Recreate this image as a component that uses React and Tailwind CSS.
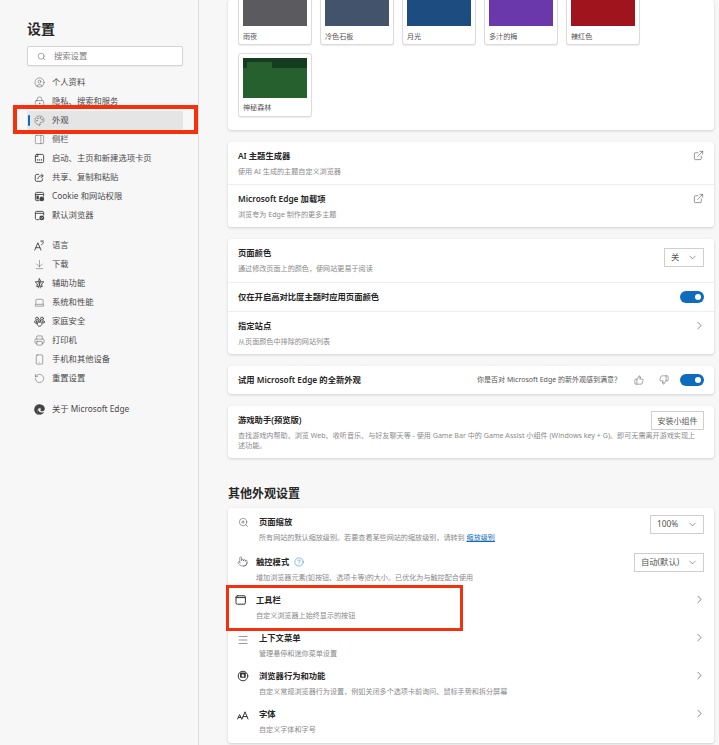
import React from "react";
import {
  Search, CircleUser, LockKeyhole, Palette, PanelRight, Laptop, Printer, Smartphone, RotateCcw,
  ArrowDownToLine, ExternalLink, ChevronDown, ChevronRight, ThumbsUp, ThumbsDown, ZoomIn, Pointer, HelpCircle, Menu,
} from "lucide-react";
import { FaEdge } from "react-icons/fa";

const FONT = "font-['Noto_Sans','Noto_Sans_CJK_SC',sans-serif]";

function Svg({ size = 12, className = "", strokeWidth = 1, children }) {
  return (
    <svg width={size} height={size} viewBox="0 0 12 12" fill="none" stroke="currentColor" strokeWidth={strokeWidth} strokeLinecap="round" strokeLinejoin="round" className={className}>
      {children}
    </svg>
  );
}

const StartIcon = (p) => (
  <Svg {...p}>
    <rect x="1.5" y="1.5" width="9" height="9" rx="1.5" />
    <path d="M1.5 3.8h2.6V1.5" />
    <path d="M3.6 7.5h.4M5.8 7.5h.4M8 7.5h.4" strokeWidth="1.1" />
  </Svg>
);
const ShareIcon = (p) => (
  <Svg {...p}>
    <path d="M5 2.6H3A1.6 1.6 0 0 0 1.4 4.2v4.4A1.6 1.6 0 0 0 3 10.2h4.6a1.6 1.6 0 0 0 1.6-1.6V7.4" />
    <path d="M4.2 7.4c.3-2 1.6-3.2 3.4-3.2h1.8" />
    <path d="M8.2 2.4l2 1.8-2 1.8" />
  </Svg>
);
const CookieIcon = (p) => (
  <Svg {...p}>
    <path d="M5.5 10.5H2.8a1.3 1.3 0 0 1-1.3-1.3V2.8a1.3 1.3 0 0 1 1.3-1.3h6.4a1.3 1.3 0 0 1 1.3 1.3v2.7" />
    <path d="M1.5 3.8h9" />
    <rect x="2.6" y="5" width="2.6" height="4.2" fill="currentColor" stroke="none" />
    <circle cx="8.5" cy="8.6" r="2.6" fill="currentColor" stroke="none" />
  </Svg>
);
const DefaultIcon = (p) => (
  <Svg {...p}>
    <path d="M5.5 10.5H2.8a1.3 1.3 0 0 1-1.3-1.3V2.8a1.3 1.3 0 0 1 1.3-1.3h6.4a1.3 1.3 0 0 1 1.3 1.3v2.7" />
    <path d="M1.5 3.6h9" />
    <circle cx="8.5" cy="8.6" r="2.7" fill="currentColor" stroke="none" />
    <path d="M7.4 8.7l.8.8 1.4-1.6" stroke="#f7f7f7" strokeWidth="0.7" />
  </Svg>
);
const LangIcon = (p) => (
  <Svg {...p}>
    <path d="M.8 11L4.2 3l3.4 8M2 8.4h4.4" />
    <path d="M7.2 1.2h3.2M8.8 1v1.2M10.4 2.6c-.3 1.2-1.2 2.1-2.4 2.6" strokeWidth="0.8" />
  </Svg>
);
const AccessIcon = (p) => (
  <Svg {...p}>
    <path d="M6 .9l1.4 3 3.3.4-2.4 2.2.6 3.3L6 8.2 3.1 9.8l.6-3.3L1.3 4.3l3.3-.4z" />
    <circle cx="6" cy="4.4" r=".7" />
    <path d="M4.6 5.6h2.8M6 5.6v1.6M6 7.2l-1 3.6M6 7.2l1 3.6" strokeWidth="0.8" />
  </Svg>
);
const FamilyIcon = (p) => (
  <Svg {...p}>
    <circle cx="3.3" cy="2.8" r="1.6" />
    <circle cx="8.7" cy="2.8" r="1.6" />
    <circle cx="1.9" cy="6.4" r="1.3" />
    <circle cx="10.1" cy="6.4" r="1.3" />
    <circle cx="6" cy="5.2" r="1.1" />
    <path d="M3.3 8.2C3.3 7 4.5 6.6 6 6.6s2.7.4 2.7 1.6c0 1.7-1.2 3-2.7 3s-2.7-1.3-2.7-3z" />
  </Svg>
);
const ToolbarIcon = (p) => (
  <Svg {...p}>
    <rect x="1" y="1.8" width="9.4" height="8.4" rx="1.4" />
    <path d="M1 3.6h9.4" />
  </Svg>
);
const BehaviorIcon = (p) => (
  <Svg {...p}>
    <circle cx="6" cy="6" r="4.8" />
    <rect x="3" y="2.6" width="5.8" height="5.2" rx=".8" fill="currentColor" stroke="none" />
    <path d="M5.9 3.6l.6 1.2 1.2.2-.9.8.2 1.2-1.1-.6-1.1.6.2-1.2-.9-.8 1.2-.2z" fill="#fff" stroke="none" />
  </Svg>
);
const FontIcon = (p) => (
  <Svg {...p}>
    <path d="M.6 10L2.6 5.6 4.6 10M1.3 8.5h2.6" />
    <path d="M5 10L8 2.8 11 10M6.1 7.6h3.8" />
  </Svg>
);

const nav1 = [
  ["个人资料", CircleUser], ["隐私、搜索和服务", LockKeyhole], ["外观", Palette, true], ["侧栏", PanelRight],
  ["启动、主页和新建选项卡页", StartIcon], ["共享、复制和粘贴", ShareIcon], ["Cookie 和网站权限", CookieIcon], ["默认浏览器", DefaultIcon],
];
const nav2 = [
  ["语言", LangIcon], ["下载", ArrowDownToLine], ["辅助功能", AccessIcon], ["系统和性能", Laptop],
  ["家庭安全", FamilyIcon], ["打印机", Printer], ["手机和其他设备", Smartphone], ["重置设置", RotateCcw],
];

function NavItem({ label, Icon, active }) {
  return (
    <div className={`relative flex h-[19px] items-center rounded-[2px] ${active ? "bg-[#e5e5e5]" : ""}`}>
      {active && <span className="absolute left-[1px] top-[4px] h-[11px] w-[1.5px] rounded bg-[#0f6cbd]" />}
      <span className="flex w-[25px] justify-end pr-[7px]">
        <Icon size={11} strokeWidth={1} className="text-[#444]" />
      </span>
      <span className="text-[8.3px] text-[#4a4a4a]">{label}</span>
    </div>
  );
}

function Tile({ name, color }) {
  return (
    <div className="h-[45px] w-[74px] rounded-b-[3px] border border-t-0 border-[#dcdcdc] bg-white px-[4px] shadow-[0_1px_1px_rgba(0,0,0,0.08)]">
      <div className={`h-[25.5px] w-full ${color}`} />
      <div className="mt-[5px] text-[7.1px] leading-[10px] text-[#555]">{name}</div>
    </div>
  );
}

function Card({ children, className = "" }) {
  return <div className={`rounded-[3px] bg-white shadow-[0_1px_3px_rgba(0,0,0,0.16)] ${className}`}>{children}</div>;
}

function Text({ title, sub }) {
  return (
    <div className={`min-w-0 flex-1 ${sub ? "mb-[1px]" : ""}`}>
      <div className="text-[8.3px] font-semibold leading-[12px] text-[#262626]">{title}</div>
      {sub && <div className="mt-[4px] text-[7.1px] leading-[10px] text-[#8a8a8a]">{sub}</div>}
    </div>
  );
}

function Row({ h, title, sub, right, divider }) {
  return (
    <div className={`flex items-center px-[10px] ${h} ${divider ? "border-t border-[#eeeeee]" : ""}`}>
      <Text title={title} sub={sub} />
      {right}
    </div>
  );
}

function Toggle() {
  return (
    <div className="flex h-[12px] w-[24px] items-center justify-end rounded-full bg-[#0f6cbd] pr-[3px]">
      <span className="h-[6px] w-[6px] rounded-full bg-white" />
    </div>
  );
}

function Select({ label, w }) {
  return (
    <div className={`flex h-[19px] items-center justify-between border border-[#cfcfcf] pl-[6px] pr-[5px] text-[8.3px] text-[#555] ${w}`}>
      <span>{label}</span>
      <ChevronDown size={11} strokeWidth={1.1} className="text-[#333]" />
    </div>
  );
}

function Ext() {
  return <ExternalLink size={11} strokeWidth={1.1} className="mb-[15px] text-[#333]" />;
}

function Chev() {
  return <ChevronRight size={13} strokeWidth={1.1} className="mb-[15px] mr-[-2px] text-[#333]" />;
}

function OtherRow({ Icon, iconClass = "", title, sub, right, help, textPad = "pl-[10px]", className = "", size = 11 }) {
  return (
    <div className={`flex h-[38px] items-center pl-[9px] pr-[10px] ${className}`}>
      <span className={`flex w-[12px] shrink-0 justify-center ${iconClass}`}>
        <Icon size={size} strokeWidth={1} className="text-[#333]" />
      </span>
      <div className={`min-w-0 flex-1 ${textPad}`}>
        <div className="flex items-center gap-[5px] text-[8.3px] font-semibold leading-[12px] text-[#262626]">
          {title}
          {help && <HelpCircle size={10} strokeWidth={1.1} className="text-[#0f6cbd]" />}
        </div>
        <div className="mt-[4px] text-[7.1px] leading-[10px] text-[#8a8a8a]">{sub}</div>
      </div>
      {right}
    </div>
  );
}

export default function App() {
  return (
    <div className={`relative flex h-[745px] w-[719px] overflow-hidden bg-[#f7f7f7] ${FONT}`}>
      <aside className="w-[199px] shrink-0 border-r border-[#dedede] pl-[27px] pr-[15px]">
        <h1 className="mt-[19px] text-[14px] font-semibold leading-[19px] text-[#262626]">设置</h1>
        <div className="mt-[8px] flex h-[20px] items-center rounded-[2px] border border-[#d4d4d4] bg-white pl-[9px] text-[8.3px] text-[#808080] shadow-[0_1px_1px_rgba(0,0,0,0.05)]">
          <Search size={9} strokeWidth={1.2} className="text-[#444]" />
          <span className="ml-[8px]">搜索设置</span>
        </div>
        <nav className="mt-[6.5px]">
          {nav1.map(([l, I, a]) => <NavItem key={l} label={l} Icon={I} active={a} />)}
        </nav>
        <nav className="mt-[11px]">
          {nav2.map(([l, I]) => <NavItem key={l} label={l} Icon={I} />)}
        </nav>
        <div className="mt-[12px]">
          <NavItem label="关于 Microsoft Edge" Icon={FaEdge} />
        </div>
      </aside>

      <main className="w-[520px] pl-[29px] pr-[5px]">
        <Card className="px-[10px] pb-[13px]">
          <div className="flex gap-[8px]">
            <Tile name="雨夜" color="bg-[#5a5a5f]" />
            <Tile name="冷色石板" color="bg-[#43536b]" />
            <Tile name="月光" color="bg-[#1c4c80]" />
            <Tile name="多汁的梅" color="bg-[#6b38ac]" />
            <Tile name="辣红色" color="bg-[#a0141e]" />
          </div>
          <div className="mt-[8px] h-[64px] w-[74px] rounded-[3px] border border-[#dcdcdc] bg-white px-[4px] pt-[4px] shadow-[0_1px_1px_rgba(0,0,0,0.08)]">
            <div className="h-[40px] w-full bg-[#25602e]">
              <div className="flex h-[9.5px] bg-[#153c1e] pl-[4px] pt-[3.5px]">
                <div className="h-[6px] w-[25px] rounded-t-[1px] bg-[#25602e]" />
              </div>
            </div>
            <div className="mt-[4px] text-[7.1px] leading-[10px] text-[#555]">神秘森林</div>
          </div>
        </Card>

        <Card className="mt-[12px]">
          <Row h="h-[42px]" title="AI 主题生成器" sub="使用 AI 生成的主题自定义浏览器" right={<Ext />} />
          <Row h="h-[43px]" divider title="Microsoft Edge 加载项" sub="浏览夸为 Edge 制作的更多主题" right={<Ext />} />
        </Card>

        <Card className="mt-[12px]">
          <Row h="h-[43px]" title="页面颜色" sub="通过修改页面上的颜色，使网站更易于阅读" right={<div className="mb-[6px]"><Select label="关" w="w-[40px]" /></div>} />
          <Row h="h-[29px]" divider title="仅在开启高对比度主题时应用页面颜色" right={<Toggle />} />
          <Row h="h-[43px]" divider title="指定站点" sub="从页面颜色中排除的网站列表" right={<Chev />} />
        </Card>

        <Card className="mt-[12px]">
          <div className="flex h-[28px] items-center px-[10px]">
            <Text title="试用 Microsoft Edge 的全新外观" />
            <span className="text-[7px] text-[#555]">你是否对 Microsoft Edge 的新外观感到满意？</span>
            <ThumbsUp size={10} strokeWidth={1} className="ml-[13px] text-[#333]" />
            <ThumbsDown size={10} strokeWidth={1} className="ml-[15px] text-[#333]" />
            <span className="ml-[11px]"><Toggle /></span>
          </div>
        </Card>

        <Card className="mt-[12px] h-[52px] px-[10px] pt-[5px]">
          <div className="flex items-start justify-between">
            <div className="mt-[3px] text-[8.3px] font-semibold leading-[12px] text-[#262626]">游戏助手(预览版)</div>
            <div className="flex h-[19px] w-[53px] items-center justify-center border border-[#cfcfcf] text-[8px] text-[#555]">安装小组件</div>
          </div>
          <div className="pr-[2px] text-[7.1px] leading-[10px] text-[#8a8a8a]">查找游戏内帮助、浏览 Web、收听音乐、与好友聊天等 - 使用 Game Bar 中的 Game Assist 小组件 (Windows key + G)。即可无需离开游戏实现上述功能。</div>
        </Card>

        <h2 className="mt-[28px] text-[12px] font-semibold leading-[16px] text-[#262626]">其他外观设置</h2>

        <Card className="mt-[6px] h-[235px] pt-[2px]">
          <OtherRow
            Icon={ZoomIn}
            iconClass="mb-[13px]"
            title="页面缩放"
            sub={<>所有网站的默认缩放级别。若要查看某些网站的缩放级别，请转到 <span className="text-[#0f6cbd] underline">缩放级别</span></>}
            right={<div className="mb-[9px]"><Select label="100%" w="w-[54px]" /></div>}
          />
          <OtherRow
            Icon={Pointer}
            iconClass="mb-[15px] ml-[-1px]"
            className="mt-[2px]"
            textPad="pl-[8px]"
            help
            title="触控模式"
            sub="增加浏览器元素(如按钮、选项卡等)的大小。已优化为与触控配合使用"
            right={<div className="mb-[14px]"><Select label="自动(默认)" w="w-[70px]" /></div>}
          />
          <OtherRow Icon={ToolbarIcon} size={12} iconClass="mb-[15px] ml-[-2px]" textPad="pl-[9px]" title="工具栏" sub="自定义浏览器上始终显示的按钮" right={<Chev />} />
          <OtherRow Icon={Menu} size={12} iconClass="mb-[11px]" title="上下文菜单" sub="管理悬停和迷你菜单设置" right={<Chev />} />
          <OtherRow Icon={BehaviorIcon} size={12} iconClass="mb-[15px]" title="浏览器行为和功能" sub="自定义常规浏览器行为设置，例如关闭多个选项卡前询问、鼠标手势和拆分屏幕" right={<Chev />} />
          <OtherRow Icon={FontIcon} size={12} iconClass="mb-[12px]" title="字体" sub="自定义字体和字号" right={<Chev />} />
        </Card>
      </main>

      <div className="pointer-events-none absolute left-[13px] top-[105px] h-[29px] w-[185px] border-[4px] border-[#f5300d]" />
      <div className="pointer-events-none absolute left-[226px] top-[585px] h-[46px] w-[237px] border-[3.5px] border-[#f5300d]" />
    </div>
  );
}
